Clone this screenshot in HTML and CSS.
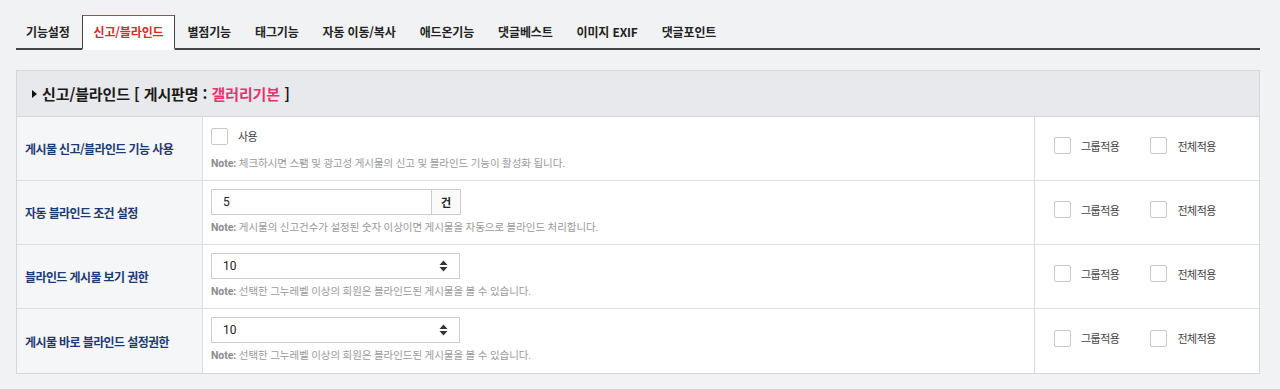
FILE: index.html
```html
<!DOCTYPE html>
<html lang="ko">
<head>
<meta charset="utf-8">
<title>신고/블라인드</title>
<link rel="stylesheet" href="styles.css">
</head>
<body>
<div class="page">
  <ul class="tabs">
    <li class="tab">기능설정</li>
    <li class="tab active">신고/블라인드</li>
    <li class="tab">별점기능</li>
    <li class="tab">태그기능</li>
    <li class="tab">자동 이동/복사</li>
    <li class="tab">애드온기능</li>
    <li class="tab">댓글베스트</li>
    <li class="tab">이미지 EXIF</li>
    <li class="tab">댓글포인트</li>
  </ul>

  <div class="panel">
    <div class="panel-head">
      <span class="caret"></span>
      <span class="title">신고/블라인드 [ 게시판명 : <em class="board">갤러리기본</em> ]</span>
    </div>

    <div class="row">
      <div class="label">게시물 신고/블라인드 기능 사용</div>
      <div class="field">
        <div class="control">
          <label class="check"><span class="box"></span><span class="check-text">사용</span></label>
        </div>
        <p class="note"><b>Note:</b> 체크하시면 스팸 및 광고성 게시물의 신고 및 블라인드 기능이 활성화 됩니다.</p>
      </div>
      <div class="apply">
        <label class="check"><span class="box"></span><span class="check-text">그룹적용</span></label>
        <label class="check"><span class="box"></span><span class="check-text">전체적용</span></label>
      </div>
    </div>

    <div class="row">
      <div class="label">자동 블라인드 조건 설정</div>
      <div class="field">
        <div class="control">
          <div class="input-group">
            <span class="input">5</span>
            <span class="addon">건</span>
          </div>
        </div>
        <p class="note"><b>Note:</b> 게시물의 신고건수가 설정된 숫자 이상이면 게시물을 자동으로 블라인드 처리합니다.</p>
      </div>
      <div class="apply">
        <label class="check"><span class="box"></span><span class="check-text">그룹적용</span></label>
        <label class="check"><span class="box"></span><span class="check-text">전체적용</span></label>
      </div>
    </div>

    <div class="row">
      <div class="label">블라인드 게시물 보기 권한</div>
      <div class="field">
        <div class="control">
          <div class="select"><span>10</span>
            <svg class="arrows" width="9" height="12" viewBox="0 0 9 12"><path d="M4.5 0.5 L8.5 5 L0.5 5 Z M0.5 7 L8.5 7 L4.5 11.5 Z" fill="#333"/></svg>
          </div>
        </div>
        <p class="note"><b>Note:</b> 선택한 그누레벨 이상의 회원은 블라인드된 게시물을 볼 수 있습니다.</p>
      </div>
      <div class="apply">
        <label class="check"><span class="box"></span><span class="check-text">그룹적용</span></label>
        <label class="check"><span class="box"></span><span class="check-text">전체적용</span></label>
      </div>
    </div>

    <div class="row last">
      <div class="label">게시물 바로 블라인드 설정권한</div>
      <div class="field">
        <div class="control">
          <div class="select"><span>10</span>
            <svg class="arrows" width="9" height="12" viewBox="0 0 9 12"><path d="M4.5 0.5 L8.5 5 L0.5 5 Z M0.5 7 L8.5 7 L4.5 11.5 Z" fill="#333"/></svg>
          </div>
        </div>
        <p class="note"><b>Note:</b> 선택한 그누레벨 이상의 회원은 블라인드된 게시물을 볼 수 있습니다.</p>
      </div>
      <div class="apply">
        <label class="check"><span class="box"></span><span class="check-text">그룹적용</span></label>
        <label class="check"><span class="box"></span><span class="check-text">전체적용</span></label>
      </div>
    </div>
  </div>
</div>
</body>
</html>
```

FILE: styles.css
```css
* { box-sizing: border-box; }
html, body { margin: 0; padding: 0; }
body {
  background: #f1f2f4;
  font-family: Roboto, "Noto Sans CJK KR", sans-serif;
  color: #333;
}
.page { padding: 15px 20px 0 16px; }

.tabs {
  list-style: none;
  margin: 0;
  padding: 0;
  display: flex;
  border-bottom: 2px solid #444;
  height: 35px;
}
.tab {
  height: 35px;
  margin-bottom: -2px;
  padding: 0 11px;
  border: 1px solid transparent;
  border-bottom: 2px solid transparent;
  font-family: "Noto Sans CJK KR", sans-serif;
  font-weight: 700;
  font-size: 12px;
  letter-spacing: -0.15px;
  line-height: 31px;
  color: #222;
  white-space: nowrap;
}
.tab:first-child { padding-left: 9px; }
.tab.active {
  background: #fff;
  border-color: #d8382c #444 #fff #444;
  color: #d62b1e;
}

.panel {
  margin-top: 20px;
  border: 1px solid #d6d7da;
  background: #fff;
}
.panel-head {
  height: 46px;
  background: #e8e9ec;
  border-bottom: 1px solid #d6d7da;
  display: flex;
  align-items: center;
  padding-left: 15px;
  gap: 5px;
}
.caret {
  width: 0; height: 0;
  border-top: 4px solid transparent;
  border-bottom: 4px solid transparent;
  border-left: 5px solid #111;
}
.title {
  font-family: "Noto Sans CJK KR", sans-serif;
  font-weight: 700;
  font-size: 15px;
  letter-spacing: -0.1px;
  color: #1a1a1a;
}
.board { font-style: normal; color: #e5336f; }

.row {
  display: grid;
  grid-template-columns: 186px 1fr 225px;
  height: 64px;
  border-bottom: 1px solid #dcdde0;
}
.row.last { border-bottom: 0; }
.label {
  background: #f5f6f8;
  border-right: 1px solid #dcdde0;
  display: flex;
  align-items: center;
  padding-left: 8px;
  font-family: "Noto Sans CJK KR", sans-serif;
  font-weight: 700;
  font-size: 12px;
  letter-spacing: -0.6px;
  color: #1e3a72;
}
.field { padding: 8px 8px 0 8px; }
.control { height: 26px; display: flex; align-items: center; }
.note {
  margin: 5px 0 0;
  font-family: Roboto, "Noto Sans CJK KR", sans-serif;
  font-size: 10.5px;
  letter-spacing: -0.05px;
  line-height: 16px;
  color: #9a9a9a;
}
.note b { color: #8a8a8a; }

.check { display: flex; align-items: center; gap: 10px; }
.box {
  width: 17px; height: 17px;
  border: 1px solid #c9c9c9;
  border-radius: 2px;
  background: #fff;
}
.check-text {
  font-family: "Noto Sans CJK KR", sans-serif;
  font-size: 11px;
  letter-spacing: -0.5px;
  color: #444;
}
.field .control .check { margin-top: -4px; }

.input-group { display: flex; height: 26px; }
.input {
  width: 221px;
  border: 1px solid #ccc;
  padding-left: 11px;
  font-size: 12px;
  line-height: 24px;
  color: #222;
}
.addon {
  width: 29px;
  border: 1px solid #ccc;
  border-left: 0;
  text-align: center;
  font-family: "Noto Sans CJK KR", sans-serif;
  font-weight: 700;
  font-size: 11px;
  line-height: 24px;
  color: #222;
  background: #fafafa;
}
.select {
  width: 249px;
  height: 26px;
  border: 1px solid #ccc;
  display: flex;
  align-items: center;
  justify-content: space-between;
  padding: 0 11px 0 11px;
  font-size: 12px;
  color: #222;
}
.arrows { display: block; }

.apply {
  border-left: 1px solid #dcdde0;
  display: flex;
  align-items: center;
  padding: 0 0 6px 19px;
  gap: 31px;
}
```
